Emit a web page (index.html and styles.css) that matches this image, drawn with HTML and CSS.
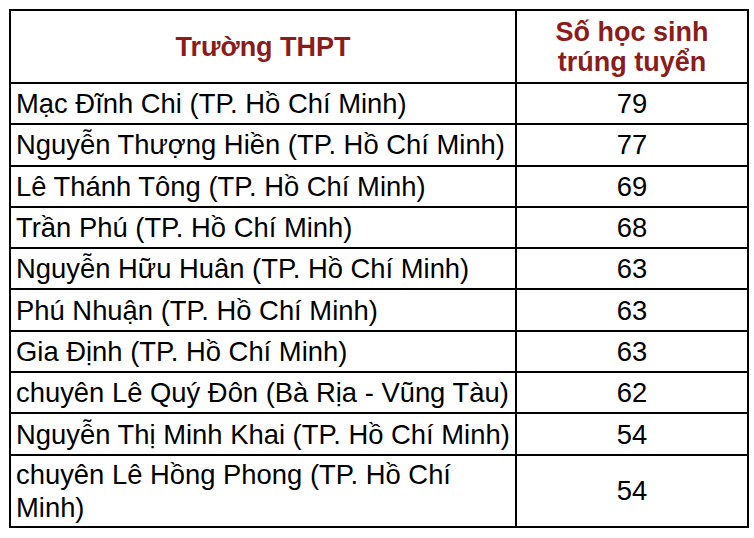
FILE: index.html
```html
<!DOCTYPE html>
<html lang="vi">
<head>
<meta charset="utf-8">
<link rel="stylesheet" href="styles.css">
</head>
<body>
<table class="tbl">
  <colgroup><col class="c1"><col class="c2"></colgroup>
  <thead>
    <tr class="head">
      <th>Trường THPT</th>
      <th>Số học sinh<br>trúng tuyển</th>
    </tr>
  </thead>
  <tbody>
    <tr><td>Mạc Đĩnh Chi (TP. Hồ Chí Minh)</td><td class="num">79</td></tr>
    <tr><td>Nguyễn Thượng Hiền (TP. Hồ Chí Minh)</td><td class="num">77</td></tr>
    <tr><td>Lê Thánh Tông (TP. Hồ Chí Minh)</td><td class="num">69</td></tr>
    <tr><td>Trần Phú (TP. Hồ Chí Minh)</td><td class="num">68</td></tr>
    <tr><td>Nguyễn Hữu Huân (TP. Hồ Chí Minh)</td><td class="num">63</td></tr>
    <tr><td>Phú Nhuận (TP. Hồ Chí Minh)</td><td class="num">63</td></tr>
    <tr><td>Gia Định (TP. Hồ Chí Minh)</td><td class="num">63</td></tr>
    <tr><td>chuyên Lê Quý Đôn (Bà Rịa - Vũng Tàu)</td><td class="num">62</td></tr>
    <tr><td>Nguyễn Thị Minh Khai (TP. Hồ Chí Minh)</td><td class="num">54</td></tr>
    <tr class="tall"><td>chuyên Lê Hồng Phong (TP. Hồ Chí Minh)</td><td class="num">54</td></tr>
  </tbody>
</table>
</body>
</html>
```

FILE: styles.css
```css
html, body {
  margin: 0;
  padding: 0;
  background: #fff;
}
body {
  padding: 9px 9px 0 9px;
  font-family: "Liberation Sans", Arial, sans-serif;
  color: #000;
}
.tbl {
  border-collapse: collapse;
  width: 738px;
  table-layout: fixed;
}
.c1 { width: 506px; }
.c2 { width: 232px; }
.tbl th, .tbl td {
  border: 2px solid #000;
  padding: 0 5px;
}
.tbl th {
  color: #8b1c1c;
  font-weight: bold;
  font-size: 27px;
  line-height: 30px;
  height: 71px;
  text-align: center;
  vertical-align: middle;
}
.tbl td {
  font-size: 27.4px;
  line-height: 33px;
  height: 39.3px;
  text-align: left;
  vertical-align: middle;
}
.tbl td.num {
  text-align: center;
}
.tbl tr.tall td {
  height: 70.6px;
}
```
